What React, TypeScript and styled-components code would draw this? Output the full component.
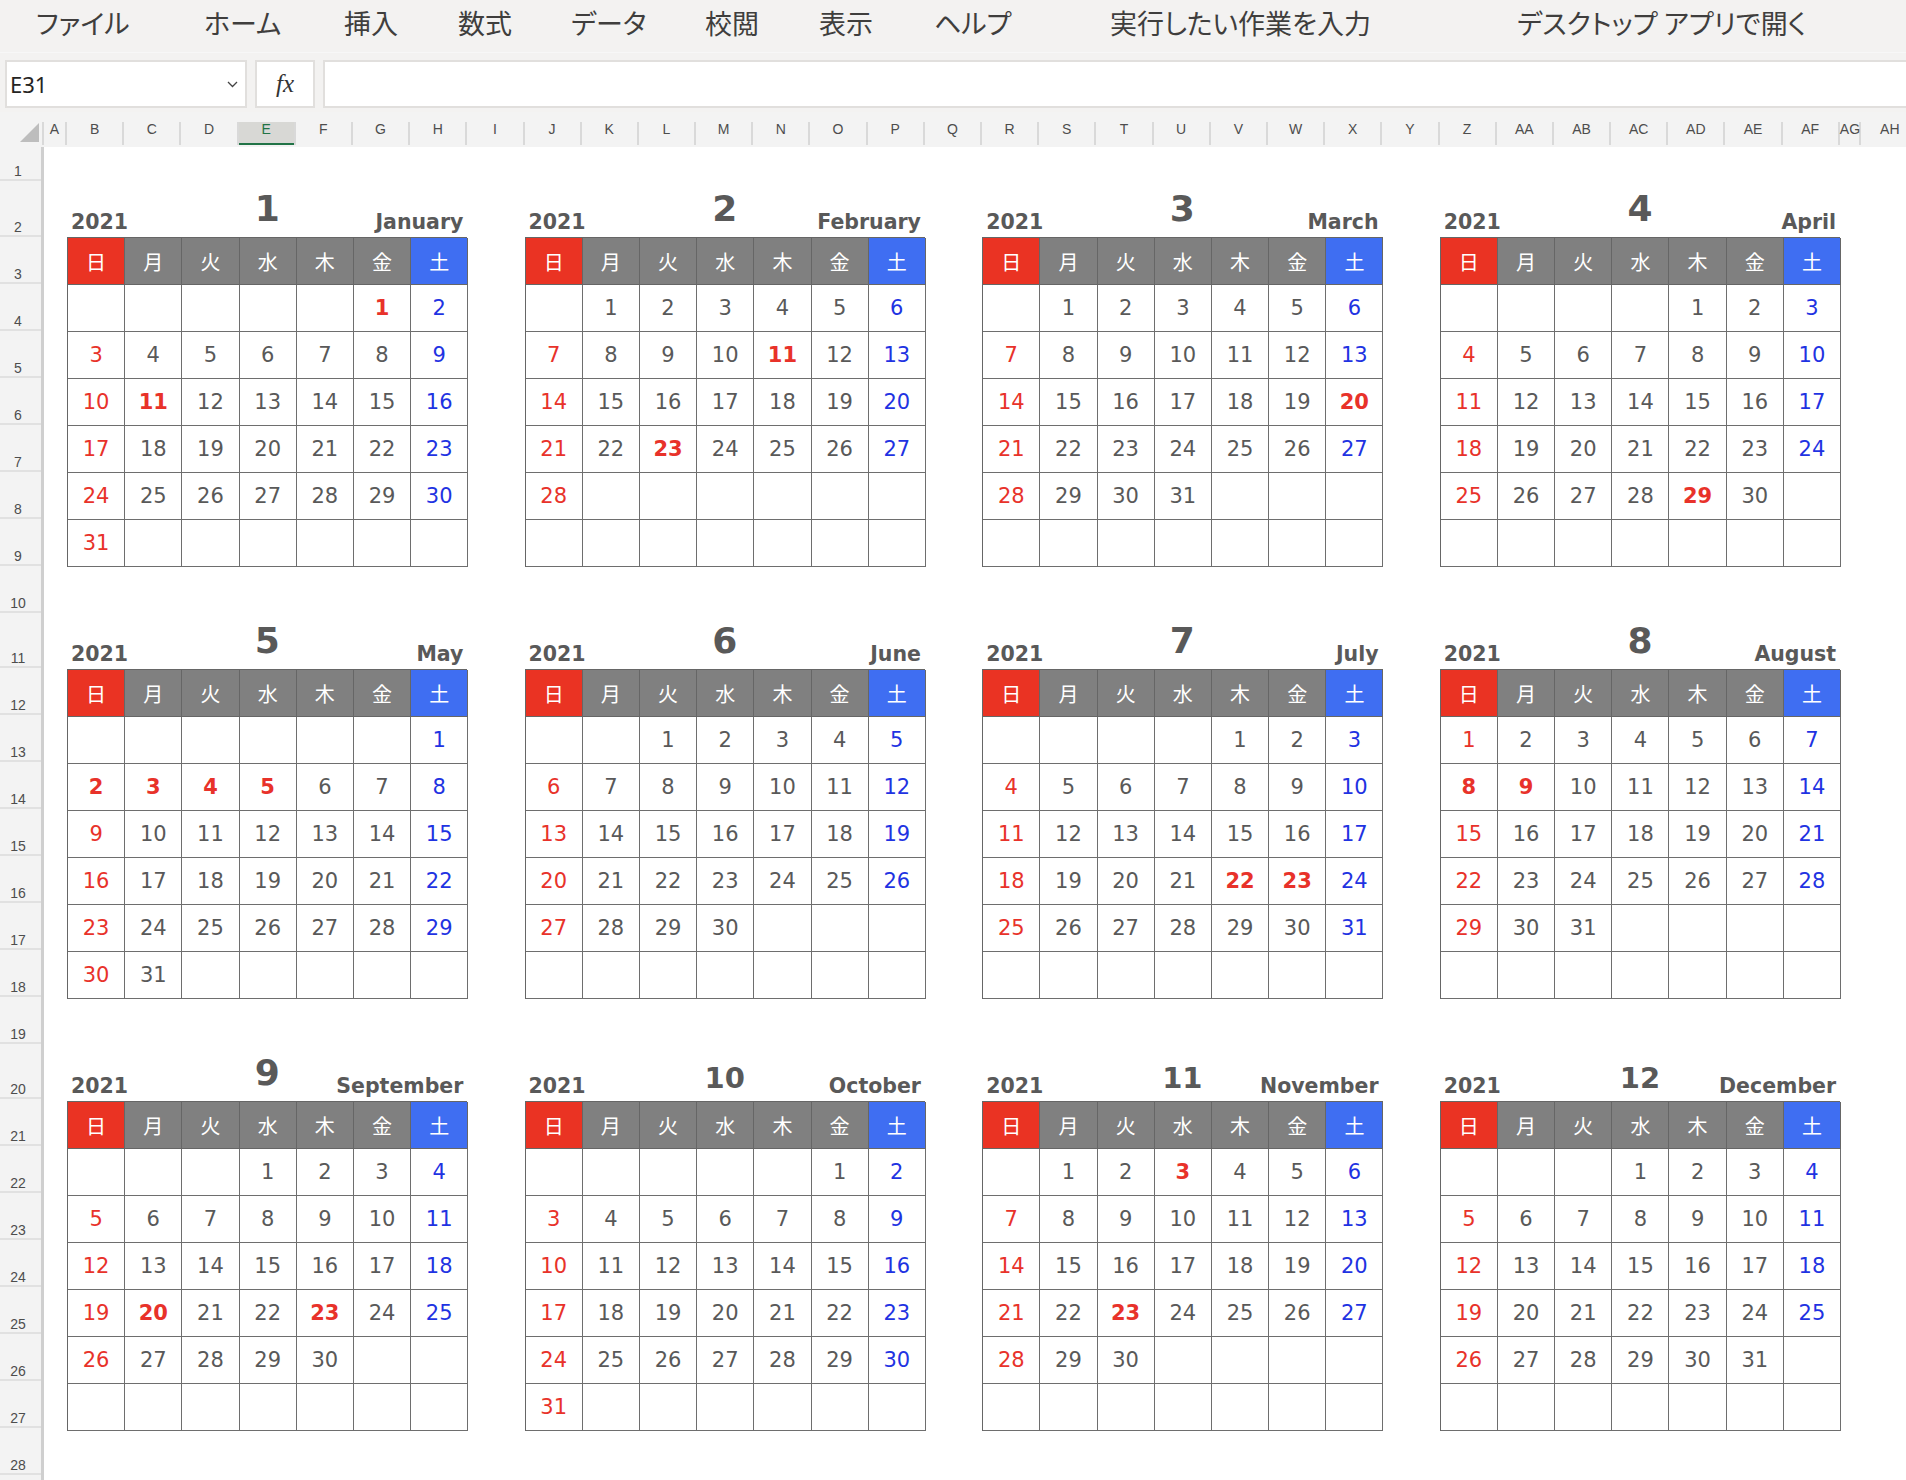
import React from "react"
import styled, { createGlobalStyle, css } from "styled-components"

const UI_FONT = `"Noto Sans CJK JP", "Noto Sans", sans-serif`
const NUM_FONT = `"DejaVu Sans", Verdana, "Noto Sans CJK JP", sans-serif`
const HEAD_FONT = `"Liberation Sans", Arial, sans-serif`

const RED = "#e8322a"
const BLUE = "#1f33e2"
const TEXT = "#595959"

const GlobalStyle = createGlobalStyle`
  html, body {
    margin: 0;
    padding: 0;
    background: #fff;
  }
  body {
    width: 1906px;
    height: 1480px;
    overflow: hidden;
  }
  * {
    box-sizing: border-box;
  }
`

const Page = styled.div`
  width: 1906px;
  height: 1480px;
  display: flex;
  flex-direction: column;
  background: #fff;
  overflow: hidden;
`

const MenuBar = styled.nav`
  height: 52px;
  flex: none;
  display: flex;
  align-items: center;
  padding: 0 0 8px 36px;
  background: #f3f2f1;
`

const MenuItem = styled.span<{ $w: number }>`
  width: ${p => p.$w}px;
  flex: none;
  font-family: ${UI_FONT};
  font-size: 27px;
  font-feature-settings: "palt";
  line-height: 1;
  color: #3f3e3d;
  white-space: nowrap;
`

const FormulaBar = styled.div`
  height: 60px;
  flex: none;
  display: flex;
  gap: 8px;
  padding: 7px 0 5px 5px;
  background: #f3f2f1;
  border-top: 1px solid #f7f7f7;
`

const Box = styled.div`
  height: 48px;
  background: #fff;
  border: 2px solid #e1dfdd;
  display: flex;
  align-items: center;
`

const NameBox = styled(Box)`
  width: 242px;
  padding: 0 7px 0 3px;
  justify-content: space-between;
  font-family: "Noto Sans", sans-serif;
  font-size: 22px;
  color: #252423;
`

const FxBox = styled(Box)`
  width: 60px;
  justify-content: center;
  font-family: "Liberation Serif", serif;
  font-style: italic;
  font-size: 25px;
  color: #333;
`

const FormulaInput = styled(Box)`
  flex: 1;
  border-right: none;
`

const ColumnBar = styled.div`
  height: 35px;
  flex: none;
  display: flex;
  align-items: flex-end;
  padding-bottom: 2px;
  background: #f3f3f3;
`

const Corner = styled.div`
  width: 44px;
  height: 23px;
  flex: none;
  display: flex;
  align-items: flex-end;
  justify-content: flex-end;
  padding: 0 3px 3px 0;
  border-right: 2px solid #d9d9d9;
`

const ColumnCell = styled.div<{ $w: number; $selected?: boolean }>`
  width: ${p => p.$w}px;
  height: 23px;
  flex: none;
  padding-top: 1px;
  border-right: 2px solid #d9d9d9;
  font-family: ${HEAD_FONT};
  font-size: 14px;
  line-height: 13px;
  text-align: center;
  color: #4d4d4d;
  ${p =>
    p.$selected &&
    css`
      background: #d8d8d5;
      color: #217346;
      box-shadow: inset 0 -2px 0 #217346;
    `}
`

const SheetBody = styled.div`
  flex: 1;
  min-height: 0;
  display: flex;
`

const RowHeaders = styled.div`
  width: 44px;
  flex: none;
  background: #f3f3f3;
  border-right: 3px solid #cfcfcf;
`

const RowCell = styled.div<{ $h: number }>`
  height: ${p => p.$h}px;
  display: flex;
  align-items: flex-end;
  justify-content: center;
  padding: 0 5px 0 0;
  border-bottom: 2px solid #e1e1e1;
  font-family: ${HEAD_FONT};
  font-size: 14px;
  color: #4d4d4d;
`

const Canvas = styled.div`
  flex: 1;
  padding: 34px 0 0 23px;
`

const CalendarGrid = styled.div`
  display: grid;
  grid-template-columns: repeat(4, 400.4px);
  column-gap: 57.2px;
  row-gap: 46px;
`

const Month = styled.section`
  display: flex;
  flex-direction: column;
`

const TitleRow = styled.div`
  height: 56px;
  display: grid;
  grid-template-columns: 1fr auto 1fr;
  align-items: end;
  padding: 0 4px 5px 4px;
  font-family: ${NUM_FONT};
  font-weight: bold;
  color: ${TEXT};
  line-height: 1;
`

const Year = styled.span`
  justify-self: start;
  font-size: 20.5px;
`

const MonthNo = styled.span<{ $wide: boolean }>`
  justify-self: center;
  font-size: ${p => (p.$wide ? 29 : 36)}px;
  margin-bottom: ${p => (p.$wide ? 3 : 5)}px;
`

const MonthName = styled.span`
  justify-self: end;
  font-size: 20.5px;
`

const Table = styled.div`
  display: grid;
  grid-template-columns: repeat(7, 57.2px);
  grid-auto-rows: 47px;
  border-top: 1px solid #666;
  border-left: 1px solid #666;
`

const HeadCell = styled.div<{ $bg: string }>`
  display: flex;
  align-items: center;
  justify-content: center;
  background: ${p => p.$bg};
  border-right: 1px solid #666;
  border-bottom: 1px solid #666;
  font-family: ${UI_FONT};
  font-size: 20px;
  color: #fff;
`

const DayCell = styled.div<{ $color: string; $bold: boolean }>`
  display: flex;
  align-items: center;
  justify-content: center;
  border-right: 1px solid #6e6e6e;
  border-bottom: 1px solid #6e6e6e;
  font-family: ${NUM_FONT};
  font-size: 21px;
  font-weight: ${p => (p.$bold ? "bold" : "normal")};
  color: ${p => p.$color};
`

const MENU = [
  { label: "ファイル", w: 168 },
  { label: "ホーム", w: 140 },
  { label: "挿入", w: 114 },
  { label: "数式", w: 113 },
  { label: "データ", w: 134 },
  { label: "校閲", w: 114 },
  { label: "表示", w: 115 },
  { label: "ヘルプ", w: 176 },
  { label: "実行したい作業を入力", w: 407 },
  { label: "デスクトップ アプリで開く", w: 340 },
]

const letters = (i: number) => {
  let s = ""
  let n = i + 1
  while (n > 0) {
    const r = (n - 1) % 26
    s = String.fromCharCode(65 + r) + s
    n = Math.floor((n - 1) / 26)
  }
  return s
}

// A is narrow, B..AF hold the calendars, AG narrow again
const COLUMNS = Array.from({ length: 34 }, (_, i) => {
  const name = letters(i)
  let w = 57.2
  if (name === "A") w = 23
  if (name === "AG") w = 21
  if (name === "AH") w = 60
  return { name, w }
})

const ROWS: number[] = [34]
for (let b = 0; b < 3; b++) {
  ROWS.push(b === 0 ? 56 : 55)
  for (let r = 0; r < 7; r++) ROWS.push(47)
  ROWS.push(47)
}

const WEEK = ["日", "月", "火", "水", "木", "金", "土"]
const HEAD_BG = ["#ea3323", "#808080", "#808080", "#808080", "#808080", "#808080", "#3f6ef2"]
const NAMES = [
  "January", "February", "March", "April", "May", "June",
  "July", "August", "September", "October", "November", "December",
]

// days shown in bold red
const HOLIDAYS: Record<number, number[]> = {
  1: [1, 11],
  2: [11, 23],
  3: [20],
  4: [29],
  5: [2, 3, 4, 5],
  7: [22, 23],
  8: [8, 9],
  9: [20, 23],
  11: [3, 23],
}

const MonthCalendar = ({ month }: { month: number }) => {
  const first = new Date(2021, month - 1, 1).getDay()
  const days = new Date(2021, month, 0).getDate()
  const holidays = HOLIDAYS[month] || []

  const cells = Array.from({ length: 42 }, (_, i) => {
    const d = i - first + 1
    const dow = i % 7
    if (d < 1 || d > days) return <DayCell key={i} $color={TEXT} $bold={false} />
    const holiday = holidays.includes(d)
    const color = holiday || dow === 0 ? RED : dow === 6 ? BLUE : TEXT
    return (
      <DayCell key={i} $color={color} $bold={holiday}>
        {d}
      </DayCell>
    )
  })

  return (
    <Month>
      <TitleRow>
        <Year>2021</Year>
        <MonthNo $wide={month > 9}>{month}</MonthNo>
        <MonthName>{NAMES[month - 1]}</MonthName>
      </TitleRow>
      <Table>
        {WEEK.map((w, i) => (
          <HeadCell key={w} $bg={HEAD_BG[i]}>
            {w}
          </HeadCell>
        ))}
        {cells}
      </Table>
    </Month>
  )
}

const App = () => {
  return (
    <Page>
      <GlobalStyle />
      <MenuBar>
        {MENU.map(m => (
          <MenuItem key={m.label} $w={m.w}>
            {m.label}
          </MenuItem>
        ))}
      </MenuBar>
      <FormulaBar>
        <NameBox>
          <span>E31</span>
          <svg width="11" height="7" viewBox="0 0 11 7">
            <path d="M1 1l4.5 4.5L10 1" fill="none" stroke="#444" strokeWidth="1.3" />
          </svg>
        </NameBox>
        <FxBox>fx</FxBox>
        <FormulaInput />
      </FormulaBar>
      <ColumnBar>
        <Corner>
          <svg width="19" height="19" viewBox="0 0 19 19">
            <polygon points="19,0 19,19 0,19" fill="#bdbdbd" />
          </svg>
        </Corner>
        {COLUMNS.map(c => (
          <ColumnCell key={c.name} $w={c.w} $selected={c.name === "E"}>
            {c.name}
          </ColumnCell>
        ))}
      </ColumnBar>
      <SheetBody>
        <RowHeaders>
          {ROWS.map((h, i) => (
            <RowCell key={i} $h={h}>
              {i + 1}
            </RowCell>
          ))}
        </RowHeaders>
        <Canvas>
          <CalendarGrid>
            {Array.from({ length: 12 }, (_, i) => (
              <MonthCalendar key={i} month={i + 1} />
            ))}
          </CalendarGrid>
        </Canvas>
      </SheetBody>
    </Page>
  )
}

export default App
